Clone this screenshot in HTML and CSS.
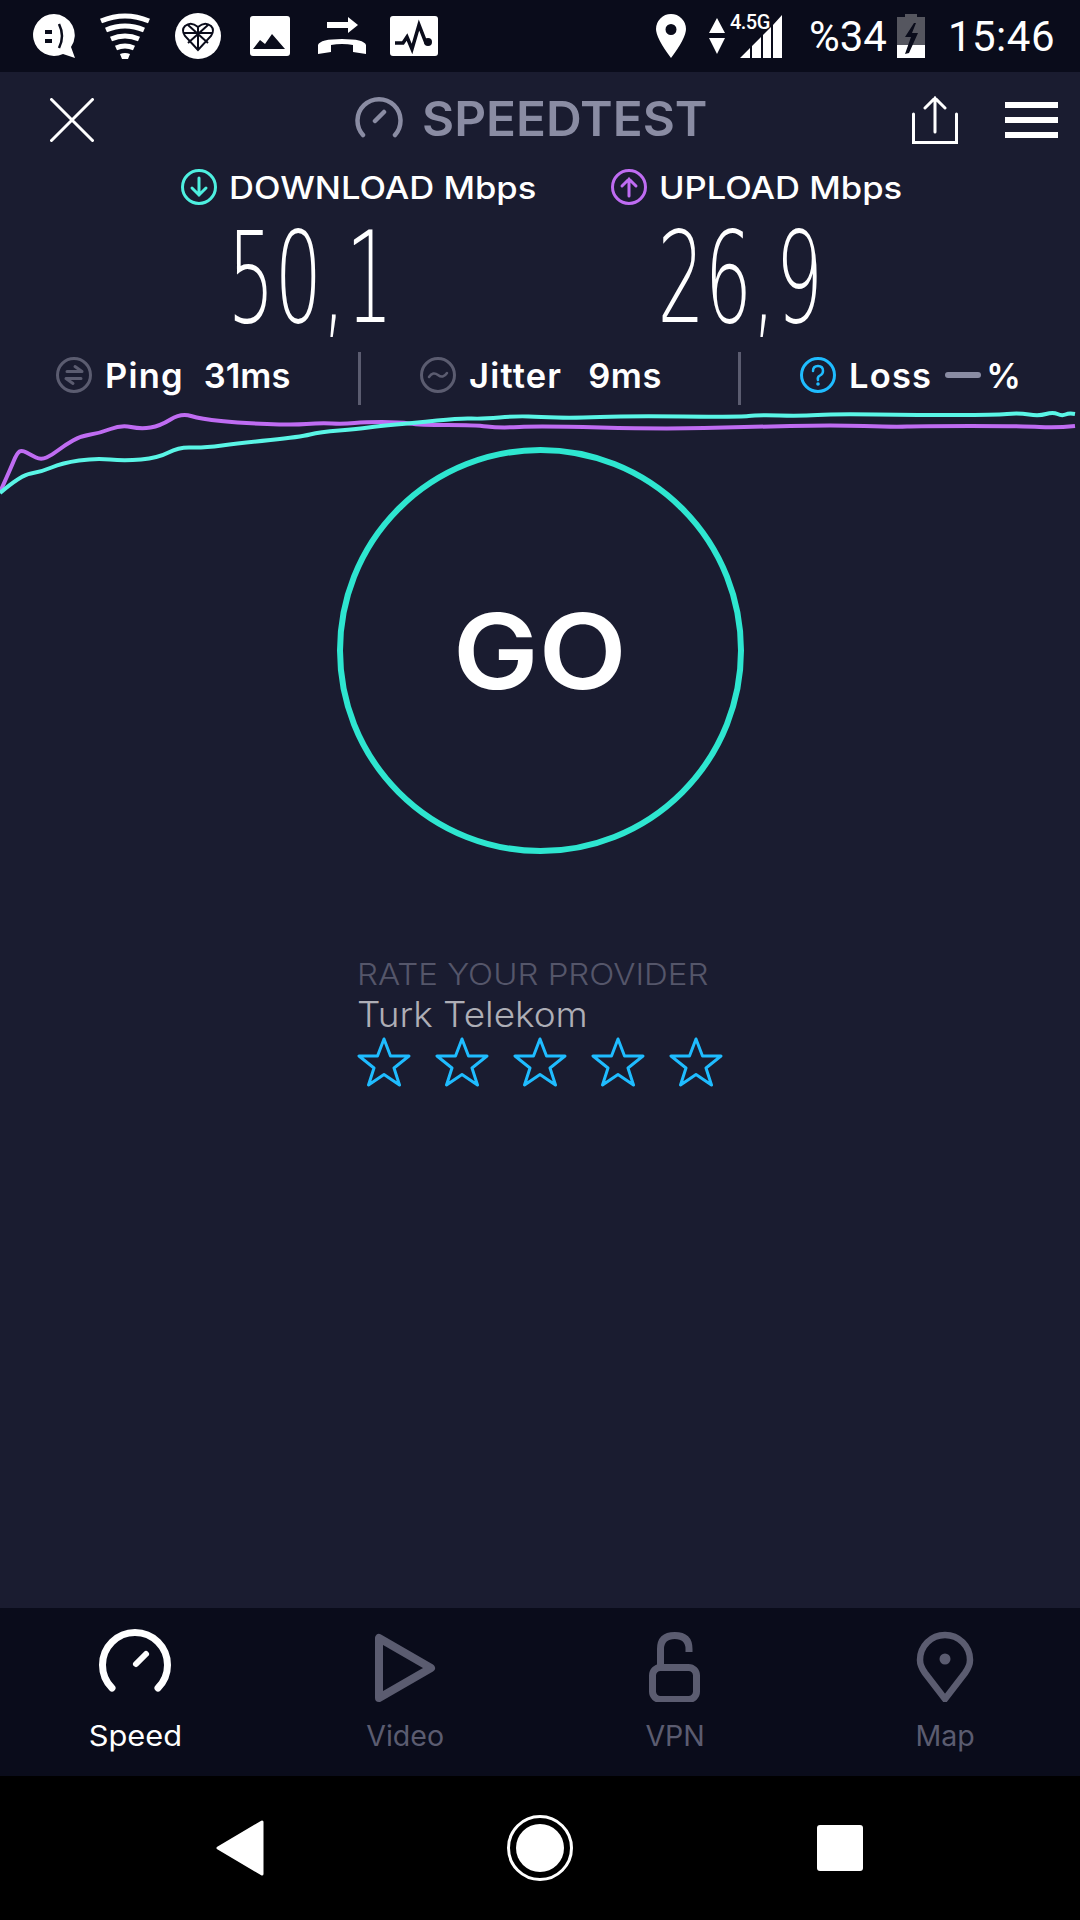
FILE: index.html
```html
<!DOCTYPE html>
<html lang="en">
<head>
    <meta charset="UTF-8">
    <title>Speedtest</title>
    <link rel="stylesheet" href="styles.css">
</head>
<body>
<div class="screen">
    <div class="statusBar">
        <div class="statusLeft">
            <svg class="sIcon" style="width:44px" viewBox="0 0 44 46"><path fill="#fff" d="M22 1a21 21 0 1 0 9 40l12 4-4-11A21 21 0 0 0 22 1z"/><path fill="none" stroke="#0a0c1b" stroke-width="2.5" d="M27 11q6 12 0 24"/><path fill="#0a0c1b" d="M13 17h7v4h-7zM13 26h7v4h-7z"/></svg>
            <svg class="sIcon" style="width:50px;margin-left:24px" viewBox="0 0 50 46"><g fill="none" stroke="#fff" stroke-width="5"><path d="M1 8q24-10 48 0"/><path d="M6 17q19-8 38 0"/><path d="M11 26q14-6 28 0"/><path d="M16 35q9-4 18 0"/></g><path fill="#fff" d="M20 41q5-2 10 0l-2 5h-6z"/></svg>
            <svg class="sIcon" style="width:46px;margin-left:25px" viewBox="0 0 46 46"><circle cx="23" cy="23" r="23" fill="#fff"/><path fill="none" stroke="#0a0c1b" stroke-width="2" d="M23 37L10 23q-4-6 0-10 6-5 13 1 7-6 13-1 4 4 0 10zM23 14v23M9 20h28M13 12l20 18M33 12L13 30"/></svg>
            <svg class="sIcon" style="width:40px;margin-left:29px" viewBox="0 0 40 40"><rect width="40" height="40" rx="3" fill="#fff"/><path fill="#0a0c1b" d="M3 33l7-9 5 4 7-10 13 15z"/></svg>
            <svg class="sIcon" style="width:50px;margin-left:27px" viewBox="0 0 50 38"><path fill="#fff" d="M10 5h21V0l10 8-10 8v-5H10z"/><path fill="#fff" d="M1 37v-9q2-6 24-6t24 6v9l-13-2v-7q-5-1-11-1t-11 1v7z"/></svg>
            <svg class="sIcon" style="width:48px;margin-left:23px" viewBox="0 0 48 40"><rect width="48" height="40" rx="3" fill="#fff"/><path fill="none" stroke="#0a0c1b" stroke-width="3.500" d="M5 27h8l4-6 5 12 7-24 7 18"/><circle cx="38" cy="26" r="4" fill="#0a0c1b"/></svg>
        </div>
        <div class="statusRight">
            <svg class="sIcon" style="width:30px" viewBox="0 0 30 44"><path fill="#fff" fill-rule="evenodd" d="M15 0a15 15 0 0 0-15 15q0 9 15 29 15-20 15-29A15 15 0 0 0 15 0zm0 10a5.500 5.500 0 1 1 0 11 5.500 5.500 0 0 1 0-11z"/></svg>
            <svg class="sIcon" style="width:16px;margin-left:23px" viewBox="0 0 16 36"><path fill="#fff" d="M8 0l8 15H0zM0 20h16L8 36z"/></svg>
            <div class="signal">
                <span class="netType">4.5G</span>
                <svg class="bars" viewBox="0 0 42 43"><path fill="#fff" d="M0 43L10 33v10zM12 43V31l9-9v21zM23 43V20l8-8v31zM33 43V10l9-10v43z"/></svg>
            </div>
            <span class="battText">%34</span>
            <svg class="sIcon" style="width:28px;margin-left:10px" viewBox="0 0 28 44"><path fill="#55565f" d="M8 0h12v3h8v28H0V3h8z"/><path fill="#fff" d="M0 31h28v13H0z"/><path fill="#0a0c1b" d="M17 9l-9 14h6l-6 17 4-1 9-20h-6l4-10z"/></svg>
            <span class="clock">15:46</span>
        </div>
    </div>

    <div class="main">
        <div class="topBar">
            <svg class="closeIcon" viewBox="0 0 44 44"><path fill="none" stroke="#fff" stroke-width="3" stroke-linecap="round" d="M1.500 1.500l41 41M42.500 1.500l-41 41"/></svg>
            <div class="logo">
                <svg class="logoIcon" viewBox="0 0 48 42"><path fill="none" stroke="#8a8ca3" stroke-width="4.500" stroke-linecap="round" d="M8 39a21.500 21.500 0 1 1 32 0M20 25l9-9"/></svg>
                <span class="logoText">SPEEDTEST</span>
            </div>
            <svg class="shareIcon" viewBox="0 0 46 48"><path fill="none" stroke="#fff" stroke-width="3" stroke-linecap="round" d="M1.500 18v28.500h43V18M23 36V2M13 12L23 2l10 10"/></svg>
            <div class="menuIcon"><i></i><i></i><i></i></div>
        </div>

        <div class="rates">
            <div class="rate">
                <div class="rateHead">
                    <svg class="rateIcon" viewBox="0 0 36 36"><circle cx="18" cy="18" r="16.500" fill="none" stroke="#4ef0e0" stroke-width="3"/><path fill="none" stroke="#4ef0e0" stroke-width="3" stroke-linecap="round" d="M18 9v17M11 19l7 7 7-7"/></svg>
                    <span class="wideText">DOWNLOAD Mbps</span>
                </div>
                <div class="rateValue"><span>50,1</span></div>
            </div>
            <div class="rate up">
                <div class="rateHead">
                    <svg class="rateIcon" viewBox="0 0 36 36"><circle cx="18" cy="18" r="16.500" fill="none" stroke="#bf6cf2" stroke-width="3"/><path fill="none" stroke="#bf6cf2" stroke-width="3" stroke-linecap="round" d="M18 27V10M11 17l7-7 7 7"/></svg>
                    <span class="wideText">UPLOAD Mbps</span>
                </div>
                <div class="rateValue"><span>26,9</span></div>
            </div>
        </div>

        <div class="stats">
            <div class="stat ping">
                <svg class="statIcon" viewBox="0 0 36 36"><circle cx="18" cy="18" r="16.500" fill="none" stroke="#5b5c70" stroke-width="3"/><path fill="none" stroke="#5b5c70" stroke-width="3" stroke-linecap="round" stroke-linejoin="round" d="M11 14.500h15l-7-5M10 21.500h15M10 21.500l7 5"/></svg>
                <b>Ping</b><b class="statValue">31ms</b>
            </div>
            <div class="stat jitter">
                <svg class="statIcon" viewBox="0 0 36 36"><circle cx="18" cy="18" r="16.500" fill="none" stroke="#5b5c70" stroke-width="3"/><path fill="none" stroke="#5b5c70" stroke-width="2.500" stroke-linecap="round" d="M9 20q4-6 9-2t9-2"/></svg>
                <b>Jitter</b><b class="statValue wide">9ms</b>
            </div>
            <div class="stat loss">
                <svg class="statIcon" viewBox="0 0 36 36"><circle cx="18" cy="18" r="16.500" fill="none" stroke="#1fbcff" stroke-width="3"/><path fill="none" stroke="#1fbcff" stroke-width="2.500" stroke-linecap="round" d="M13 14q0-5 5-5t5 5q0 3-3 4.500t-2 4.500"/><circle cx="18" cy="27" r="1.800" fill="#1fbcff"/></svg>
                <b>Loss</b><i class="dash"></i><b class="percent">%</b>
            </div>
        </div>

        <svg class="chart" viewBox="0 0 1080 100">
            <path class="upLine" d="M0 92Q10 70 13.5 61.500Q17 53 19.500 51.500Q22 50 26.500 52.500Q31 55 36 57.500Q41 60 46.500 57.500Q52 55 58.500 50Q65 45 73 40.500Q81 36 90.500 34.500Q100 33 110.500 29Q121 25 131 27Q141 29 150.500 27.500Q160 26 170.500 19.500Q181 13 191 16Q201 19 221 21Q241 23 267 24Q293 25 306.500 24Q320 23 332 23.500Q344 24 354.500 23Q365 22 382 22Q399 22 409.500 23.500Q420 25 447.500 25Q475 25 487 26.500Q499 28 519.500 27Q540 26 600.500 27.500Q661 29 704 28Q747 27 790 26Q833 25 864 26Q895 27 907 26.500Q919 26 970.500 26Q1022 26 1039.500 27Q1057 28 1075 26"/>
            <path class="downLine" d="M0 93Q21 75 31 73.500Q41 72 51.500 67.500Q62 63 79 60.500Q96 58 110 59.500Q124 61 141 59.500Q158 58 168.500 52.500Q179 47 191 47.500Q203 48 222 45.500Q241 43 270.500 40Q300 37 310 34.500Q320 32 339 30.500Q358 29 368.500 27.500Q379 26 396 24.500Q413 23 437 20.500Q461 18 471.500 18.500Q482 19 499.500 17.500Q517 16 528.500 16.500Q540 17 557 17.500Q574 18 600 17Q626 16 683 16.500Q740 17 748.500 16Q757 15 779.500 15.500Q802 16 817.500 15Q833 14 876 14.500Q919 15 957 15Q995 15 1007 14Q1019 13 1029 14.500Q1039 16 1046 14Q1053 12 1057.500 14Q1062 16 1065.500 14.500Q1069 13 1075 14"/>
        </svg>

        <div class="goRing"><span>GO</span></div>

        <div class="provider">
            <div class="providerLabel">RATE YOUR PROVIDER</div>
            <div class="providerName">Turk Telekom</div>
            <div class="stars">
                <svg class="star" viewBox="0 0 54 50"><path d="M27 2l6.500 17H52L37 31l5.500 17L27 37.500 11.500 48 17 31 2 19h18.500z"/></svg>
                <svg class="star" viewBox="0 0 54 50"><path d="M27 2l6.500 17H52L37 31l5.500 17L27 37.500 11.500 48 17 31 2 19h18.500z"/></svg>
                <svg class="star" viewBox="0 0 54 50"><path d="M27 2l6.500 17H52L37 31l5.500 17L27 37.500 11.500 48 17 31 2 19h18.500z"/></svg>
                <svg class="star" viewBox="0 0 54 50"><path d="M27 2l6.500 17H52L37 31l5.500 17L27 37.500 11.500 48 17 31 2 19h18.500z"/></svg>
                <svg class="star" viewBox="0 0 54 50"><path d="M27 2l6.500 17H52L37 31l5.500 17L27 37.500 11.500 48 17 31 2 19h18.500z"/></svg>
            </div>
        </div>
    </div>

    <div class="tabBar">
        <div class="tab active">
            <svg class="tabIcon" viewBox="0 0 76 76"><g fill="none" stroke="#fff" stroke-linecap="round"><path stroke-width="7" d="M15 62a32.500 32.500 0 1 1 46 0"/><path stroke-width="6" d="M39 38l10-10"/></g></svg>
            <span>Speed</span>
        </div>
        <div class="tab">
            <svg class="tabIcon" viewBox="0 0 76 76"><path fill="none" stroke="#5b5c70" stroke-width="8" stroke-linejoin="round" d="M12 12v60l52-30z"/></svg>
            <span>Video</span>
        </div>
        <div class="tab">
            <svg class="tabIcon" viewBox="0 0 76 76"><g fill="none" stroke="#5b5c70" stroke-width="7"><rect x="15.500" y="41.500" width="44" height="32" rx="8"/><path d="M23.500 41V23q0-13.500 14.250-13.500T52 23v3"/></g></svg>
            <span>VPN</span>
        </div>
        <div class="tab">
            <svg class="tabIcon" viewBox="0 0 76 76"><path fill="none" stroke="#5b5c70" stroke-width="6.500" d="M38 73L18 47Q13 40 13 34a25 25 0 0 1 50 0q0 6-5 13z"/><circle cx="38" cy="33" r="5.500" fill="#5b5c70"/></svg>
            <span>Map</span>
        </div>
    </div>

    <div class="sysNav">
        <svg class="backKey" viewBox="0 0 48 56"><path fill="#fff" stroke="#fff" stroke-width="3" stroke-linejoin="round" d="M2 28L46 2v52z"/></svg>
        <div class="homeKey"><i></i></div>
        <div class="recentKey"></div>
    </div>
</div>
</body>
</html>
```
FILE: styles.css
```css
*{
    box-sizing: border-box;
}

body{
    margin: 0;
    background-color: #000;
    font-family: Inter, "Open Sans", sans-serif;
    color: #fff;
}

.screen{
    width: 1080px;
    height: 1920px;
    display: flex;
    flex-direction: column;
    overflow: hidden;
}

/* status bar */
.statusBar{
    height: 72px;
    background-color: #0a0c1b;
    display: flex;
    justify-content: space-between;
    align-items: center;
    padding: 0 25px 0 32px;
}

.statusLeft,
.statusRight{
    display: flex;
    align-items: center;
}

.sIcon{
    display: block;
}

.signal{
    position: relative;
    width: 42px;
    height: 43px;
    margin-left: 15px;
}

.netType{
    position: absolute;
    left: -10px;
    top: -5px;
    font-family: Roboto, sans-serif;
    font-size: 20px;
    font-weight: 500;
    letter-spacing: -0.5px;
}

.bars{
    display: block;
    width: 42px;
    height: 43px;
}

.battText{
    margin-left: 27px;
    font-family: Roboto, sans-serif;
    font-size: 42px;
}

.clock{
    margin-left: 23px;
    font-family: Roboto, sans-serif;
    font-size: 42px;
    letter-spacing: 0.5px;
}

/* main area */
.main{
    position: relative;
    flex: 1;
    background-color: #1a1c30;
    display: flex;
    flex-direction: column;
}

.topBar{
    display: flex;
    align-items: flex-start;
    height: 92px;
    padding: 24px 22px 0 50px;
}

.closeIcon{
    width: 44px;
    height: 44px;
    margin-top: 2px;
}

.logo{
    display: flex;
    align-items: center;
    margin-left: 261px;
    color: #8a8ca3;
    font-size: 48px;
    line-height: 42px;
    font-weight: 600;
}

.logoIcon{
    width: 48px;
    height: 42px;
    margin-right: 19px;
}

.logoText{
    display: inline-block;
    transform: translateY(2px) scaleX(1.03);
    transform-origin: left;
}

.shareIcon{
    width: 46px;
    height: 48px;
    margin-left: auto;
}

.menuIcon{
    width: 53px;
    margin-left: 47px;
    margin-top: 6px;
}

.menuIcon i{
    display: block;
    height: 6px;
    margin-bottom: 9px;
    background-color: #fff;
}

.rates{
    display: flex;
    height: 188px;
    padding-left: 181px;
}

.rate{
    width: 430px;
}

.rateHead{
    display: flex;
    align-items: center;
    height: 46px;
    font-size: 31px;
    font-weight: 500;
}

.rateIcon{
    width: 36px;
    height: 36px;
    margin-right: 12px;
}

.wideText{
    display: inline-block;
    transform: scaleX(1.115);
    transform-origin: left;
}

.rateValue{
    display: flex;
    justify-content: center;
    width: 258px;
    margin-top: 10px;
    height: 120px;
    line-height: 118px;
    font-family: "DejaVu Sans", sans-serif;
    font-size: 126px;
    font-weight: 200;
}

.rateValue span{
    display: inline-block;
    transform: scaleX(0.59);
}

.stats{
    display: flex;
    height: 53px;
    font-size: 34.5px;
}

.stat{
    display: flex;
    align-items: center;
    height: 53px;
    padding-bottom: 7px;
}

.stat b{
    font-weight: 600;
    letter-spacing: 1.2px;
}

.ping{
    width: 361px;
    padding-left: 56px;
    border-right: 3px solid #5b5c70;
}

.jitter{
    width: 380px;
    padding-left: 59px;
    border-right: 3px solid #5b5c70;
}

.loss{
    padding-left: 59px;
}

.statIcon{
    width: 36px;
    height: 36px;
    margin-right: 13px;
}

.stat .statValue{
    margin-left: 20px;
    letter-spacing: 0;
}

.stat .statValue.wide{
    margin-left: 26px;
    letter-spacing: 0.5px;
}

.dash{
    width: 36px;
    height: 6px;
    margin-left: 13px;
    border-radius: 3px;
    background-color: #8a8ca3;
}

.percent{
    margin-left: 5px;
}

/* the lines run behind the top of the GO ring */
.chart{
    position: absolute;
    left: 0;
    top: 328px;
    width: 1080px;
    height: 100px;
}

.chart path{
    fill: none;
    stroke-width: 4;
    stroke-linejoin: round;
}

.upLine{
    stroke: #bf6cf2;
}

.downLine{
    stroke: #5af5e6;
}

.goRing{
    width: 407px;
    height: 407px;
    margin: 42px auto 0;
    border: 6px solid #2ee6d0;
    border-radius: 50%;
    display: flex;
    justify-content: center;
    align-items: center;
    font-size: 104px;
    font-weight: 600;
}

.goRing span{
    display: inline-block;
    transform: scaleX(1.1);
}

.provider{
    margin: 102px 0 0 357px;
}

.providerLabel{
    font-size: 30px;
    font-weight: 300;
    line-height: 36px;
    color: #55566a;
    transform: scaleX(1.1);
    transform-origin: left;
}

.providerName{
    font-size: 35px;
    font-weight: 300;
    line-height: 44px;
    color: #aeaeb6;
    transform: scaleX(1.055);
    transform-origin: left;
}

.stars{
    display: flex;
    gap: 24px;
    margin-top: 1px;
}

.star{
    width: 54px;
    height: 50px;
}

.star path{
    fill: none;
    stroke: #1fbcff;
    stroke-width: 3;
    stroke-linejoin: round;
}

/* bottom tabs */
.tabBar{
    height: 168px;
    background-color: #0a0c1b;
    display: grid;
    grid-template-columns: repeat(4, 270px);
}

.tab{
    display: flex;
    flex-direction: column;
    align-items: center;
    padding-top: 18px;
    font-size: 28px;
    color: #5b5c70;
}

.tab.active{
    color: #fff;
}

.tab span{
    display: inline-block;
    transform: scaleX(1.02);
}

.tab.active span{
    transform: scaleX(1.1);
}

.tabIcon{
    width: 76px;
    height: 76px;
    margin-bottom: 17px;
}

.sysNav{
    height: 144px;
    background-color: #000;
    display: flex;
    align-items: center;
    padding-left: 216px;
}

.backKey{
    width: 48px;
    height: 56px;
}

.homeKey{
    width: 66px;
    height: 66px;
    margin-left: 243px;
    border: 3px solid #fff;
    border-radius: 50%;
    padding: 6px;
}

.homeKey i{
    display: block;
    width: 48px;
    height: 48px;
    border-radius: 50%;
    background-color: #fff;
}

.recentKey{
    width: 46px;
    height: 46px;
    margin-left: 244px;
    border-radius: 3px;
    background-color: #fff;
}
```
